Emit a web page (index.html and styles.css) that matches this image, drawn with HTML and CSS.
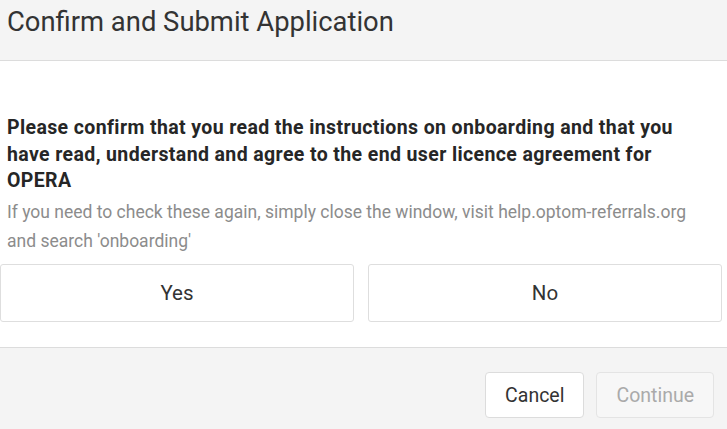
FILE: index.html
```html
<!DOCTYPE html>
<html>
<head>
<meta charset="utf-8">
<link rel="stylesheet" href="styles.css">
</head>
<body>
<div class="modal">
  <div class="modal-header">
    <h1 class="modal-title">Confirm and Submit Application</h1>
  </div>
  <div class="modal-body">
    <p class="question">Please confirm that you read the instructions on onboarding and that you have read, understand and agree to the end user licence agreement for OPERA</p>
    <p class="hint">If you need to check these again, simply close the window, visit help.optom-referrals.org and search 'onboarding'</p>
    <div class="choices">
      <button class="choice">Yes</button>
      <button class="choice">No</button>
    </div>
  </div>
  <div class="modal-footer">
    <button class="btn">Cancel</button>
    <button class="btn btn-disabled">Continue</button>
  </div>
</div>
</body>
</html>
```
FILE: styles.css
```css
html, body {
  margin: 0;
  padding: 0;
  background: #ffffff;
}
body {
  font-family: Roboto, "Liberation Sans", sans-serif;
  color: #333333;
}
.modal {
  width: 727px;
  height: 429px;
  display: flex;
  flex-direction: column;
}
.modal-header {
  background: #f4f4f4;
  height: 60px;
  border-bottom: 1px solid #dcdcdc;
  padding: 0 7px;
}
.modal-title {
  margin: 0;
  font-weight: 400;
  font-size: 27.4px;
  line-height: 44px;
  color: #333;
}
.modal-body {
  height: 286px;
  padding: 0 5px 0 0;
}
.question {
  margin: 54px 10px 0 7px;
  font-weight: 700;
  font-size: 19.5px;
  letter-spacing: 0.38px;
  line-height: 26.5px;
  color: #262626;
}
.hint {
  margin: 3px 10px 0 7px;
  font-size: 17.5px;
  line-height: 29px;
  color: #8c8c8c;
}
.choices {
  display: grid;
  grid-template-columns: 1fr 1fr;
  gap: 14px;
  margin-top: 8px;
}
.choice {
  height: 58px;
  background: #fff;
  border: 1px solid #dedede;
  border-radius: 3px;
  font-family: inherit;
  font-size: 20.5px;
  color: #333;
}
.modal-footer {
  flex: 1;
  background: #f4f4f4;
  border-top: 1px solid #dcdcdc;
  display: flex;
  justify-content: flex-end;
  align-items: flex-start;
  gap: 12px;
  padding: 24px 13px 0 0;
}
.btn {
  height: 46px;
  padding: 0 19px;
  background: #fff;
  border: 1px solid #dcdcdc;
  border-radius: 4px;
  font-family: inherit;
  font-size: 19.5px;
  color: #333;
}
.btn-disabled {
  background: #f7f7f7;
  color: #aaaaaa;
  border-color: #e4e4e4;
}
```
